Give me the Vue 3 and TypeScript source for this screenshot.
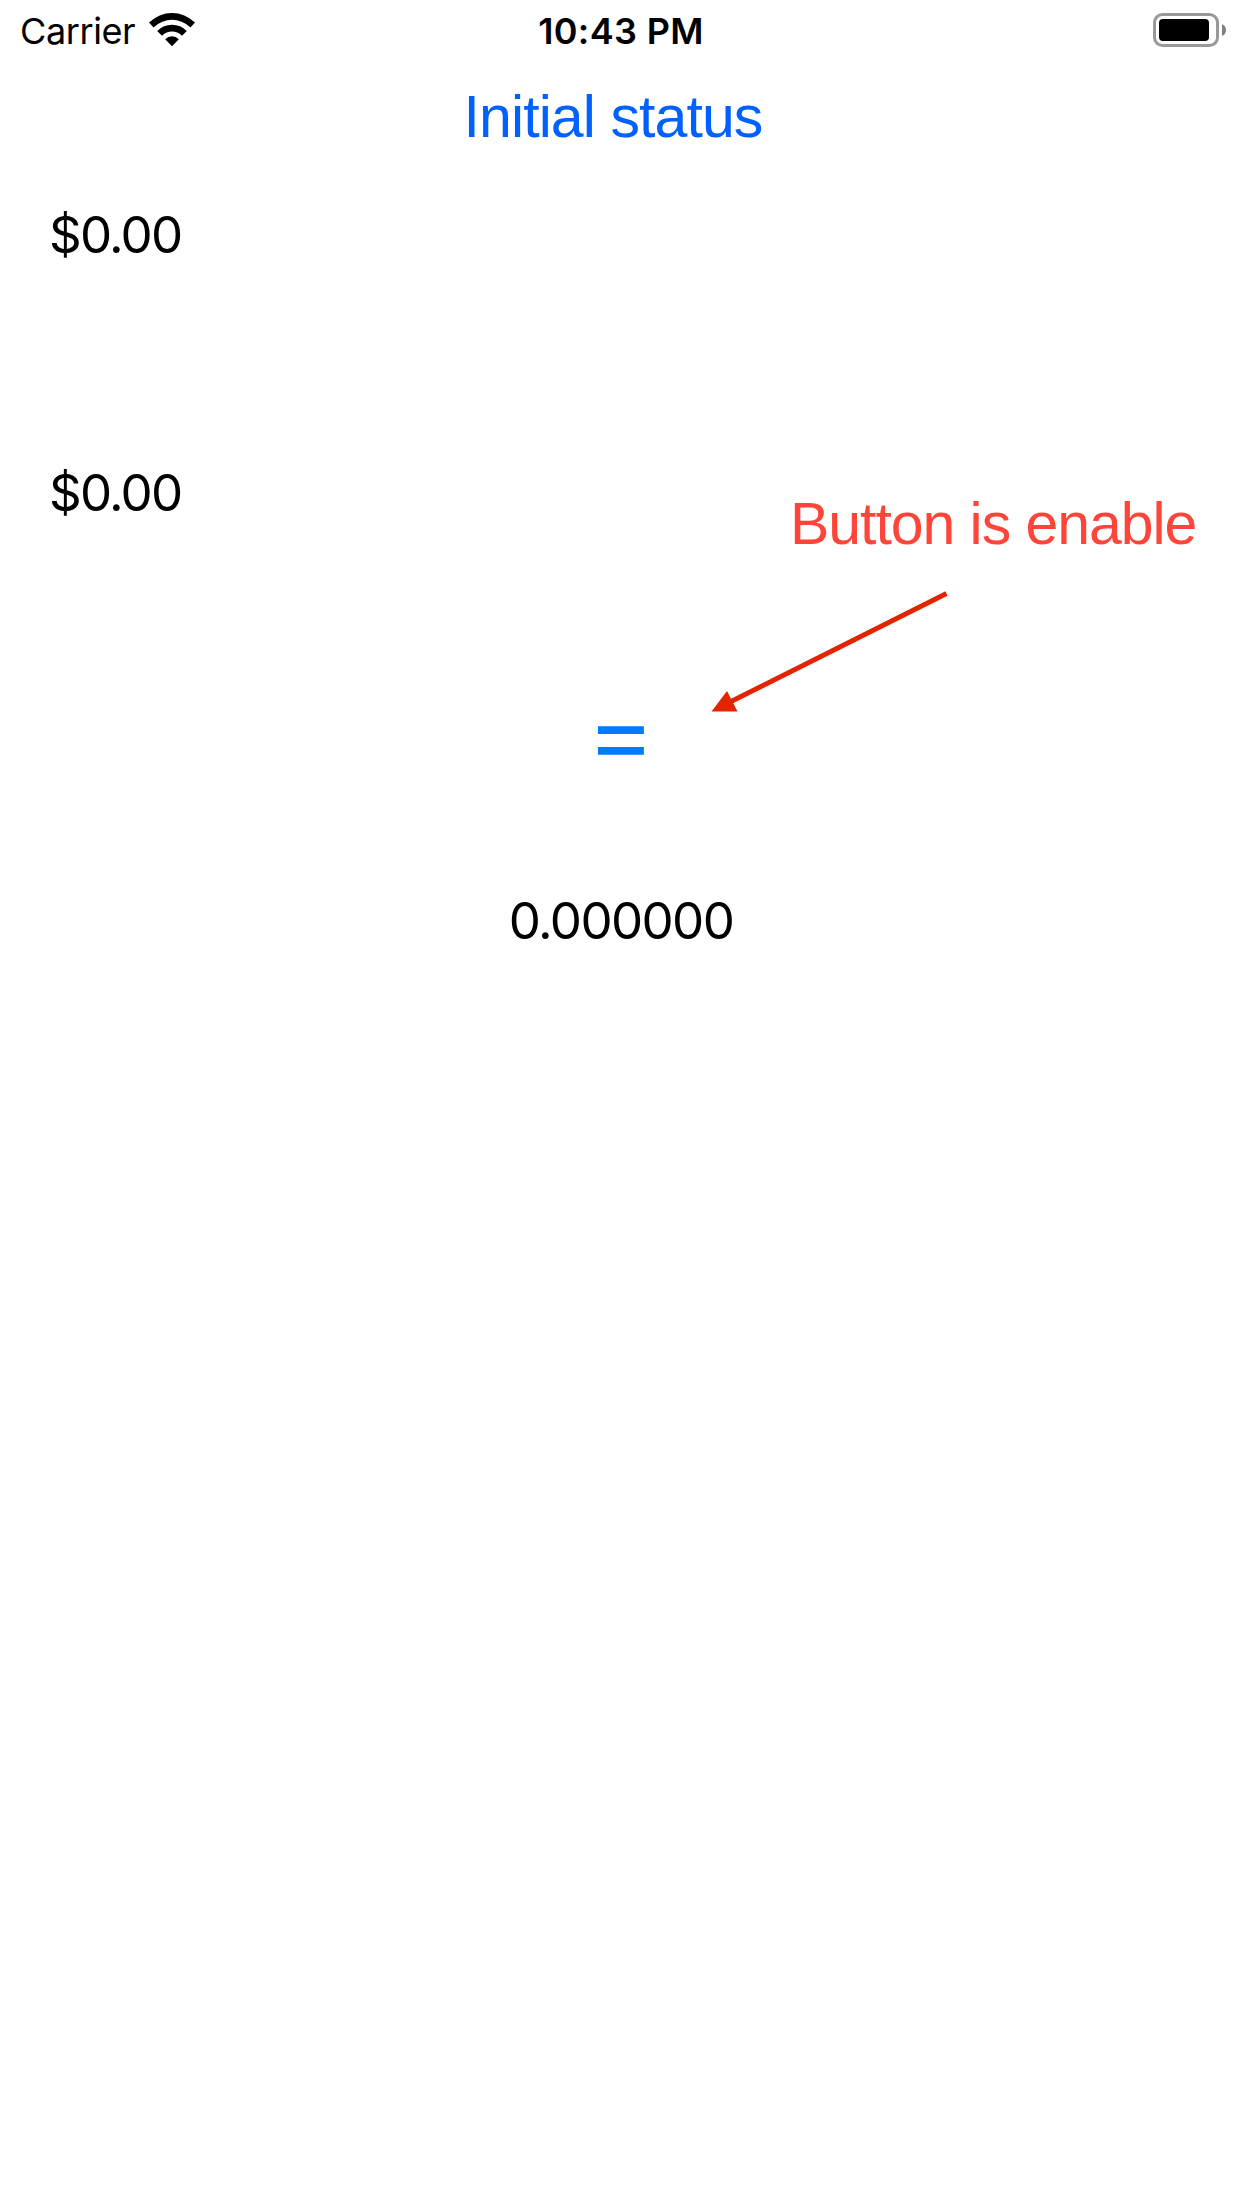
<script setup lang="ts">
import { ref } from 'vue'

const amounts = ref<string[]>(['$0.00', '$0.00'])
const result = ref<string>('0.000000')
</script>

<template>
  <main class="screen">
    <header class="status-bar">
      <div class="network">
        <span class="carrier">Carrier</span>
        <svg class="wifi" width="46" height="34" viewBox="0 0 46 34" aria-hidden="true">
          <path d="M0 9.6 Q10 0 23 0 Q36 0 46 9.6 L41.4 14.4 Q33 6.8 23 6.8 Q13 6.8 4.6 14.4 Z" />
          <path d="M8.2 18 Q14.5 11.8 23 11.8 Q31.5 11.8 37.8 18 L33 22.8 Q28.5 18.6 23 18.6 Q17.500 18.6 13 22.8 Z" />
          <path d="M16.2 26.2 Q19 23.300 23 23.300 Q27 23.300 29.800 26.2 L23 33.200 Z" />
        </svg>
      </div>
      <time class="clock">10:43 PM</time>
      <div class="power">
        <svg width="74" height="36" viewBox="0 0 74 36" aria-hidden="true">
          <rect x="1.500" y="1.500" width="63" height="31" rx="8" fill="none" stroke="#999" stroke-width="3" />
          <rect x="6" y="6" width="50" height="22" rx="4" />
          <path d="M69 11 Q73 13 73 17 Q73 21 69 23 Z" fill="#808080" />
        </svg>
      </div>
    </header>

    <h1 class="title">Initial status</h1>

    <section class="amounts">
      <div v-for="(amount, i) in amounts" :key="i" class="amount">{{ amount }}</div>
    </section>

    <button class="equals" type="button">=</button>
    <output class="result">{{ result }}</output>

    <div class="note">
      <span class="note-text">Button is enable</span>
      <svg class="arrow" width="240" height="124" viewBox="0 0 240 124" aria-hidden="true">
        <path d="M235.500 3.500 L20 111.500" stroke="#e32400" stroke-width="4.800" />
        <path d="M0.500 121.500 L16 101 L26.500 121.500 Z" fill="#e32400" />
      </svg>
    </div>
  </main>
</template>

<style>
body {
  margin: 0;
  background: #fff;
}
</style>

<style scoped>
.screen {
  position: relative;
  display: flex;
  flex-direction: column;
  width: 1242px;
  height: 2208px;
  overflow: hidden;
  background: #fff;
  color: #000;
  font-family: Inter, sans-serif;
}

.status-bar {
  display: grid;
  grid-template-columns: 1fr auto 1fr;
  height: 62px;
  line-height: 62px;
  font-size: 36px;
}

.network {
  display: flex;
  padding-left: 20px;
}

.carrier {
  width: 129px;
  letter-spacing: -0.4px;
}

.wifi {
  margin-top: 13px;
}

.clock {
  font-weight: 600;
  letter-spacing: 0.35px;
}

.power {
  display: flex;
  justify-content: flex-end;
  padding: 13px 15px 0 0;
}

.title {
  margin: 1px 0 0 -16px;
  height: 109px;
  text-align: center;
  font: 400 59px/109px "Liberation Sans", sans-serif;
  letter-spacing: -0.9px;
  color: #0061fe;
}

.amounts {
  display: flex;
  flex-direction: column;
  gap: 132px;
  padding-left: 49px;
}

.amount {
  height: 126px;
  font-size: 51px;
  line-height: 126px;
  letter-spacing: -1.8px;
}

.equals {
  align-self: center;
  width: 120px;
  height: 120px;
  margin-top: 117px;
  padding: 0;
  border: 0;
  background: none;
  color: #007aff;
  font: 400 104px/120px Inter, sans-serif;
  transform: scaleY(0.93);
}

.result {
  height: 120px;
  margin-top: 68px;
  text-align: center;
  font-size: 51px;
  line-height: 120px;
  letter-spacing: -1.6px;
}

.note {
  position: absolute;
  top: 491px;
  left: 711px;
  width: 500px;
}

.note-text {
  display: block;
  margin-left: 79px;
  font: 400 59px/66px "Liberation Sans", sans-serif;
  letter-spacing: -1.05px;
  white-space: nowrap;
  color: #ff453a;
}

.arrow {
  display: block;
  margin-top: 33px;
}
</style>
